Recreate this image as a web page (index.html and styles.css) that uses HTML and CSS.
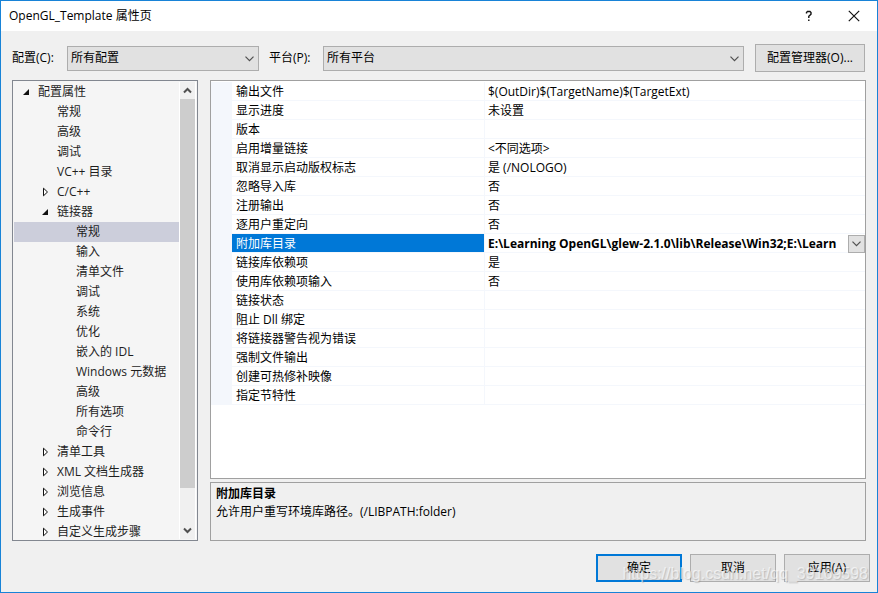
FILE: index.html
```html
<!DOCTYPE html>
<html lang="zh-CN">
<head>
<meta charset="utf-8">
<title>OpenGL_Template 属性页</title>
<link rel="stylesheet" href="styles.css">
</head>
<body>
<main class="dialog">
  <header class="titlebar">
    <h1 class="title">OpenGL_Template 属性页</h1>
    <button class="caption-btn" type="button" aria-label="帮助"><svg width="10" height="12" viewBox="0 0 10 12"><path d="M2.500 3.500V2.500L3.500 1.500H6L7 2.500V4.200L4.800 6.200V8M4.800 9.500v1.500" fill="none" stroke="#111" stroke-width="1.400"/></svg></button>
    <button class="caption-btn" type="button" aria-label="关闭"><svg width="12" height="12" viewBox="0 0 12 12"><path d="M.8.8l10.400 10.400M11.200.8L.8 11.200" fill="none" stroke="#111" stroke-width="1.200"/></svg></button>
  </header>

  <form class="toolbar">
    <label class="config-label" for="config">配置(C):</label>
    <div class="combo combo-config">
      <select id="config"><option>所有配置</option></select>
      <svg class="combo-arrow" width="9" height="6" viewBox="0 0 9 6"><path d="M.5.7l4 4l4-4" fill="none" stroke="#505050" stroke-width="1.200"/></svg>
    </div>
    <label class="platform-label" for="platform">平台(P):</label>
    <div class="combo combo-platform">
      <select id="platform"><option>所有平台</option></select>
      <svg class="combo-arrow" width="9" height="6" viewBox="0 0 9 6"><path d="M.5.7l4 4l4-4" fill="none" stroke="#505050" stroke-width="1.200"/></svg>
    </div>
    <button class="btn btn-manager" type="button">配置管理器(O)...</button>
  </form>

  <div class="content">
    <nav class="tree-pane" aria-label="配置属性">
      <ul class="tree">
        <li><button class="node" type="button"><svg class="mark" width="8" height="8" viewBox="0 0 8 8"><path d="M7 1v6H1z" fill="#111"/></svg>配置属性</button>
          <ul>
            <li><button class="node leaf" type="button">常规</button></li>
            <li><button class="node leaf" type="button">高级</button></li>
            <li><button class="node leaf" type="button">调试</button></li>
            <li><button class="node leaf" type="button">VC++ 目录</button></li>
            <li><button class="node" type="button"><svg class="mark" width="8" height="10" viewBox="0 0 8 10"><path d="M2.500 1.200v7.600L6.500 5z" fill="#fff" stroke="#111"/></svg>C/C++</button></li>
            <li><button class="node" type="button"><svg class="mark" width="8" height="8" viewBox="0 0 8 8"><path d="M7 1v6H1z" fill="#111"/></svg>链接器</button>
              <ul>
                <li><button class="node leaf selected" type="button">常规</button></li>
                <li><button class="node leaf" type="button">输入</button></li>
                <li><button class="node leaf" type="button">清单文件</button></li>
                <li><button class="node leaf" type="button">调试</button></li>
                <li><button class="node leaf" type="button">系统</button></li>
                <li><button class="node leaf" type="button">优化</button></li>
                <li><button class="node leaf" type="button">嵌入的 IDL</button></li>
                <li><button class="node leaf" type="button">Windows 元数据</button></li>
                <li><button class="node leaf" type="button">高级</button></li>
                <li><button class="node leaf" type="button">所有选项</button></li>
                <li><button class="node leaf" type="button">命令行</button></li>
              </ul>
            </li>
            <li><button class="node" type="button"><svg class="mark" width="8" height="10" viewBox="0 0 8 10"><path d="M2.500 1.200v7.600L6.500 5z" fill="#fff" stroke="#111"/></svg>清单工具</button></li>
            <li><button class="node" type="button"><svg class="mark" width="8" height="10" viewBox="0 0 8 10"><path d="M2.500 1.200v7.600L6.500 5z" fill="#fff" stroke="#111"/></svg>XML 文档生成器</button></li>
            <li><button class="node" type="button"><svg class="mark" width="8" height="10" viewBox="0 0 8 10"><path d="M2.500 1.200v7.600L6.500 5z" fill="#fff" stroke="#111"/></svg>浏览信息</button></li>
            <li><button class="node" type="button"><svg class="mark" width="8" height="10" viewBox="0 0 8 10"><path d="M2.500 1.200v7.600L6.500 5z" fill="#fff" stroke="#111"/></svg>生成事件</button></li>
            <li><button class="node" type="button"><svg class="mark" width="8" height="10" viewBox="0 0 8 10"><path d="M2.500 1.200v7.600L6.500 5z" fill="#fff" stroke="#111"/></svg>自定义生成步骤</button></li>
          </ul>
        </li>
      </ul>
      <div class="scrollbar">
        <button class="scroll-btn" type="button" aria-label="向上滚动"><svg width="9" height="7" viewBox="0 0 9 7"><path d="M1 5.500L4.500 2L8 5.500" fill="none" stroke="#505050" stroke-width="2"/></svg></button>
        <div class="scroll-track"><div class="scroll-thumb"></div></div>
        <button class="scroll-btn" type="button" aria-label="向下滚动"><svg width="9" height="7" viewBox="0 0 9 7"><path d="M1 1.500L4.500 5L8 1.500" fill="none" stroke="#505050" stroke-width="2"/></svg></button>
      </div>
    </nav>

    <section class="details">
      <div class="grid-pane">
        <table class="props">
          <colgroup><col class="col-gutter"><col class="col-name"><col></colgroup>
          <tbody>
            <tr><td></td><th scope="row">输出文件</th><td>$(OutDir)$(TargetName)$(TargetExt)</td></tr>
            <tr><td></td><th scope="row">显示进度</th><td>未设置</td></tr>
            <tr><td></td><th scope="row">版本</th><td></td></tr>
            <tr><td></td><th scope="row">启用增量链接</th><td>&lt;不同选项&gt;</td></tr>
            <tr><td></td><th scope="row">取消显示启动版权标志</th><td>是 (/NOLOGO)</td></tr>
            <tr><td></td><th scope="row">忽略导入库</th><td>否</td></tr>
            <tr><td></td><th scope="row">注册输出</th><td>否</td></tr>
            <tr><td></td><th scope="row">逐用户重定向</th><td>否</td></tr>
            <tr class="active"><td></td><th scope="row">附加库目录</th><td><div class="editor"><span class="path">E:\Learning OpenGL\glew-2.1.0\lib\Release\Win32;E:\Learn</span><button class="drop" type="button" aria-label="展开"><svg width="9" height="6" viewBox="0 0 9 6"><path d="M.5.7l4 4l4-4" fill="none" stroke="#505050" stroke-width="1.200"/></svg></button></div></td></tr>
            <tr><td></td><th scope="row">链接库依赖项</th><td>是</td></tr>
            <tr><td></td><th scope="row">使用库依赖项输入</th><td>否</td></tr>
            <tr><td></td><th scope="row">链接状态</th><td></td></tr>
            <tr><td></td><th scope="row">阻止 Dll 绑定</th><td></td></tr>
            <tr><td></td><th scope="row">将链接器警告视为错误</th><td></td></tr>
            <tr><td></td><th scope="row">强制文件输出</th><td></td></tr>
            <tr><td></td><th scope="row">创建可热修补映像</th><td></td></tr>
            <tr><td></td><th scope="row">指定节特性</th><td></td></tr>
          </tbody>
        </table>
      </div>
      <div class="description">
        <h2>附加库目录</h2>
        <p>允许用户重写环境库路径。(/LIBPATH:folder)</p>
      </div>
    </section>
  </div>

  <footer class="actions">
    <button class="btn btn-default" type="button">确定</button>
    <button class="btn" type="button">取消</button>
    <button class="btn" type="button">应用(A)</button>
  </footer>
  <span class="watermark">https://blog.csdn.net/qq_39169598</span>
</main>
</body>
</html>
```
FILE: styles.css
```css
* { box-sizing: border-box; }

body {
  margin: 0;
  color: #000;
  font: 12px/18px "Open Sans", "Noto Sans CJK SC", sans-serif;
}

button, select {
  margin: 0;
  padding: 0;
  border: 0;
  border-radius: 0;
  background: none;
  color: inherit;
  font: inherit;
}

h1, h2, p, ul { margin: 0; padding: 0; font-size: 12px; }
ul { list-style: none; }
svg { display: block; flex: none; }

.dialog {
  position: relative;
  display: flex;
  flex-direction: column;
  height: 100vh;
  border: 1px solid #1883d7;
  background: #f0f0f0;
}

.titlebar {
  display: flex;
  align-items: center;
  height: 30px;
  padding: 0 1px 0 8px;
  background: #fff;
}
.title { flex: 1; font-weight: 400; }
.caption-btn {
  display: flex;
  align-items: center;
  justify-content: center;
  width: 45px;
  height: 28px;
}

.toolbar {
  display: flex;
  align-items: center;
  padding: 13px 12px 8px 11px;
}
.config-label { width: 55px; }
.platform-label { width: 54px; margin-left: 10px; }
.combo { position: relative; height: 25px; }
.combo-config { width: 192px; }
.combo-platform { flex: 1; }
.combo select {
  width: 100%;
  height: 25px;
  padding: 0 20px 0 3px;
  border: 1px solid #adadad;
  background: #e1e1e1;
  appearance: none;
}
.combo-arrow { position: absolute; top: 10px; right: 5px; pointer-events: none; }

.btn {
  width: 86px;
  height: 28px;
  border: 1px solid #adadad;
  background: #e1e1e1;
}
.btn-manager { width: 110px; margin-left: 11px; }
.btn-default { border: 2px solid #0078d7; }

.content {
  display: flex;
  flex: 1;
  gap: 12px;
  min-height: 0;
  padding: 0 11px;
}

.tree-pane {
  display: flex;
  width: 186px;
  padding: 1px;
  border: 1px solid #828790;
  background: #f5f5f5;
  color: #1e1e1e;
}
.tree { flex: 1; overflow: hidden; }
.node {
  display: flex;
  align-items: center;
  width: 100%;
  height: 20px;
  padding-left: 8px;
  white-space: nowrap;
}
.mark { width: 8px; margin-right: 8px; }
.tree .leaf { padding-left: 24px; }
.tree ul .node { padding-left: 27px; }
.tree ul .leaf { padding-left: 43px; }
.tree ul ul .leaf { padding-left: 62px; }
.selected { background: #cccedb; }

.scrollbar {
  display: flex;
  flex-direction: column;
  width: 17px;
  border-left: 1px solid #fff;
  border-right: 1px solid #fff;
  background: #f0f0f0;
}
.scroll-btn {
  display: flex;
  align-items: center;
  justify-content: center;
  width: 100%;
  height: 17px;
}
.scroll-track { flex: 1; }
.scroll-thumb { height: 92%; background: #cdcdcd; }

.details {
  display: flex;
  flex: 1;
  flex-direction: column;
  gap: 3px;
  min-width: 0;
}
.grid-pane {
  flex: 1;
  min-height: 0;
  overflow: hidden;
  padding-top: 1px;
  border: 1px solid #a0a0a0;
  background: #fff;
}
.props {
  width: 100%;
  border-collapse: collapse;
  table-layout: fixed;
}
.col-gutter { width: 21px; }
.col-name { width: 253px; }
.props tr { height: 19px; }
.props th, .props td {
  height: 19px;
  padding: 0 0 0 3px;
  font-weight: 400;
  line-height: 18px;
  text-align: left;
  white-space: nowrap;
  box-shadow: inset 0 -1px #f4f7fc;
}
.props th { padding-left: 4px; box-shadow: inset -1px -1px #f4f7fc; }
.props td:first-child { background: #f4f7fc; }
.props .active th { background: #0078d7; color: #fff; }
.editor { display: flex; height: 18px; }
.path {
  flex: 1;
  min-width: 0;
  overflow: hidden;
  font-weight: 700;
}
.drop {
  display: flex;
  align-items: center;
  justify-content: center;
  width: 17px;
  height: 18px;
  border: 1px solid #adadad;
  background: #e1e1e1;
}

.description {
  height: 59px;
  padding: 2px 5px;
  border: 1px solid #a0a0a0;
}

.actions {
  display: flex;
  justify-content: flex-end;
  gap: 8px;
  padding: 13px 7px 10px;
}

.watermark {
  position: absolute;
  right: 9px;
  bottom: 8px;
  color: rgba(255, 255, 255, 0.6);
  font: 16px/20px "Liberation Sans", sans-serif;
  text-shadow: 1px 1px 1px rgba(120, 120, 120, 0.35);
  pointer-events: none;
}
```
